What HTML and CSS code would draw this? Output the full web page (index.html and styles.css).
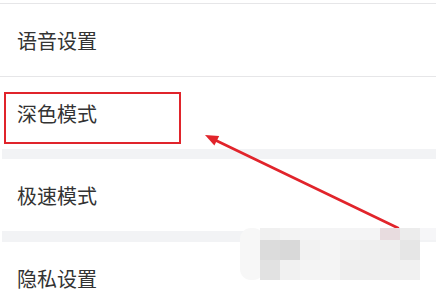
FILE: index.html
```html
<!DOCTYPE html>
<html lang="zh-CN">
<head>
<meta charset="utf-8">
<link rel="stylesheet" href="styles.css">
</head>
<body>
<div class="page">
  <div class="list">
    <div class="rule top"></div>
    <div class="item">语音设置</div>
    <div class="rule"></div>
    <div class="item">深色模式<span class="mark"></span></div>
    <div class="band"></div>
    <div class="item">极速模式</div>
    <div class="band band2"></div>
    <div class="item">隐私设置</div>
  </div>
  <svg class="overlay" width="436" height="294" viewBox="0 0 436 294">
    <line x1="398" y1="228" x2="214" y2="139.5" stroke="#e1242b" stroke-width="2.6" stroke-linecap="round"/>
    <polygon points="205,135 219.2,136 214.4,145.6" fill="#e1242b"/>
    <g class="mosaic">
      <rect x="240" y="228" width="24" height="52" rx="11" fill="#f7f7f7"/>
      <rect x="260" y="228" width="20" height="12" fill="#f0f0f0"/>
      <rect x="280" y="228" width="20" height="12" fill="#f3f3f3"/>
      <rect x="300" y="228" width="80" height="12" fill="#f4f4f5"/>
      <rect x="380" y="228" width="20" height="12" fill="#e8dcdf"/>
      <rect x="400" y="228" width="20" height="12" fill="#ececec"/>
      <rect x="420" y="228" width="16" height="12" fill="#f6f6f8"/>
      <rect x="260" y="240" width="20" height="20" fill="#dcdcdc"/>
      <rect x="280" y="240" width="20" height="20" fill="#d9d9d9"/>
      <rect x="300" y="240" width="20" height="20" fill="#f2f2f2"/>
      <rect x="320" y="240" width="20" height="20" fill="#f4f4f4"/>
      <rect x="340" y="240" width="20" height="20" fill="#f1f1f1"/>
      <rect x="360" y="240" width="20" height="20" fill="#efefef"/>
      <rect x="380" y="240" width="20" height="20" fill="#eeeeee"/>
      <rect x="400" y="240" width="20" height="20" fill="#e6e6e6"/>
      <rect x="260" y="260" width="20" height="20" fill="#e2e2e2"/>
      <rect x="280" y="260" width="20" height="20" fill="#f1f1f1"/>
      <rect x="300" y="260" width="40" height="20" fill="#f4f4f4"/>
      <rect x="340" y="260" width="40" height="20" fill="#efefef"/>
      <rect x="380" y="260" width="20" height="20" fill="#f0f0f0"/>
      <rect x="400" y="260" width="20" height="20" fill="#f1f1f1"/>
    </g>
  </svg>
</div>
</body>
</html>
```

FILE: styles.css
```css
html, body {
  margin: 0;
  padding: 0;
  background: #ffffff;
}
.page {
  position: relative;
  width: 436px;
  height: 294px;
  overflow: hidden;
}
.list {
  display: flex;
  flex-direction: column;
}
.rule {
  height: 1px;
  background: #e6e6e8;
}
.rule.top {
  margin-top: 3px;
}
.item {
  position: relative;
  display: flex;
  align-items: center;
  height: 72px;
  padding-left: 17px;
  font-family: "Noto Sans CJK SC", "Noto Sans", sans-serif;
  font-size: 20px;
  color: #333333;
  letter-spacing: 0;
}
.band {
  height: 10px;
  background: #f2f3f5;
  margin-left: 2px;
}
.band2 {
  height: 11px;
}
.mark {
  position: absolute;
  left: 4px;
  top: 15px;
  width: 173px;
  height: 48px;
  border: 2px solid #e0242b;
}
.overlay {
  position: absolute;
  left: 0;
  top: 0;
  pointer-events: none;
}
```
